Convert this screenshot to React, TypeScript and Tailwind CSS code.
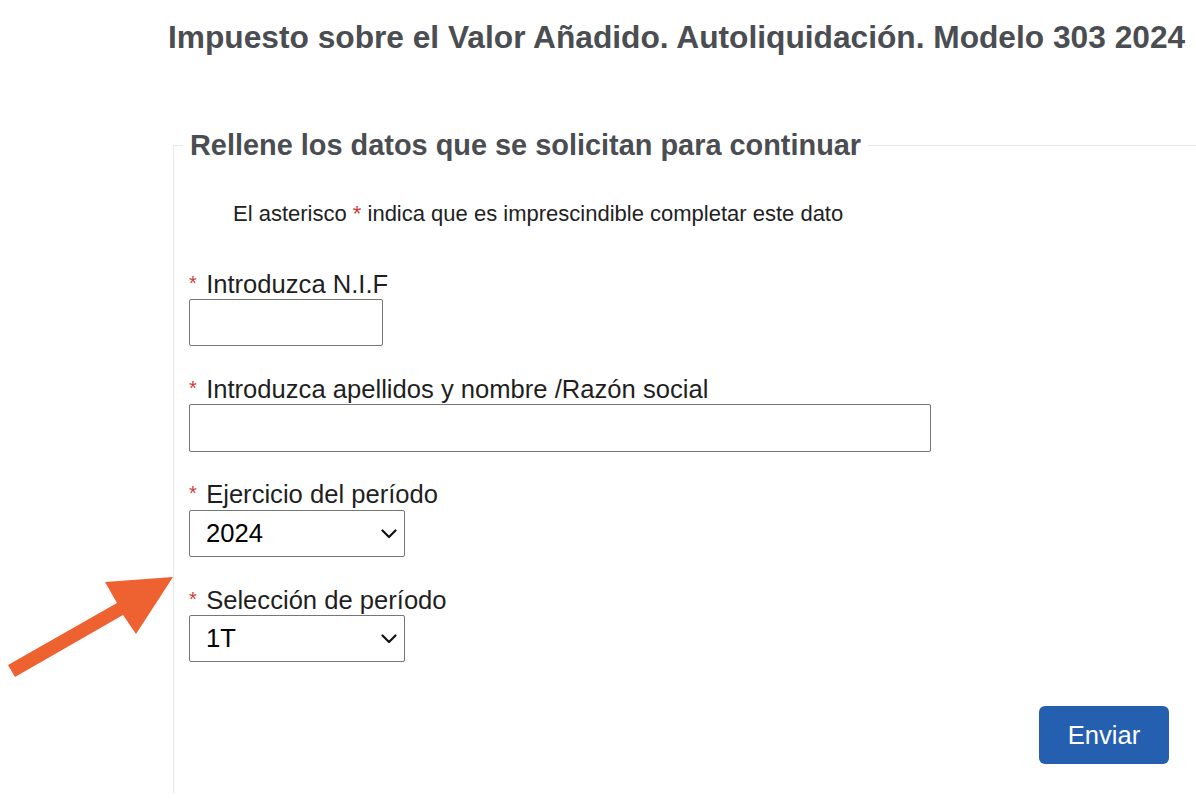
const font = { fontFamily: '"Liberation Sans", Arial, sans-serif' };

function Req({ children }: { children: React.ReactNode }) {
  return (
    <label className="block h-[26px] text-[25.6px] leading-[26px] text-[#1f1f1f] whitespace-nowrap">
      <span className="relative top-[-3px] inline-block w-[10px] text-[#cf3b36] text-[20px] leading-none">*</span>{' '}
      {children}
    </label>
  );
}

function Chevron() {
  return (
    <svg
      className="absolute left-[192px] top-[19px] pointer-events-none"
      width="16"
      height="10"
      viewBox="0 0 16 10"
    >
      <polyline points="1.5,1.5 8,8 14.5,1.5" fill="none" stroke="#111" strokeWidth="2.2" strokeLinecap="round" strokeLinejoin="round" />
    </svg>
  );
}

function Select({ value, options }: { value: string; options: string[] }) {
  return (
    <div className="relative w-[216px] h-[47px]">
      <select
        defaultValue={value}
        className="appearance-none block w-full h-full border border-[#767676] rounded-[2px] bg-white pl-[16px] text-[25.6px] text-black outline-none"
      >
        {options.map((o) => (
          <option key={o}>{o}</option>
        ))}
      </select>
      <Chevron />
    </div>
  );
}

export default function App() {
  return (
    <div className="relative w-[1196px] h-[804px] overflow-hidden bg-white" style={font}>
      <h1 className="pl-[168px] pt-[19px] text-[31.7px] leading-[36px] font-bold text-[#4a4d51] whitespace-nowrap">
        Impuesto sobre el Valor Añadido. Autoliquidación. Modelo 303 2024
      </h1>

      <fieldset className="ml-[173px] mt-[75px] w-[1023px] h-[663px] border border-r-0 border-b-0 border-[#e6e9ec]">
        <legend className="ml-[9px] px-[7px] text-[28.9px] leading-[30px] font-bold text-[#4a4d51] whitespace-nowrap">
          Rellene los datos que se solicitan para continuar
        </legend>

        <div className="pl-[15px] pr-[27px]">
          <p className="mt-[43px] pl-[44px] text-[22px] leading-[22px] text-[#222] whitespace-nowrap">
            El asterisco <span className="text-[#cf3b36]">*</span> indica que es imprescindible completar este dato
          </p>

          <div className="mt-[46px]">
            <Req>Introduzca N.I.F</Req>
            <input className="mt-[2px] block w-[194px] h-[47px] border border-[#767676] rounded-[2px] outline-none" />
          </div>

          <div className="mt-[30px]">
            <Req>Introduzca apellidos y nombre /Razón social</Req>
            <input className="mt-[2px] block w-[742px] h-[48px] border border-[#767676] rounded-[2px] outline-none" />
          </div>

          <div className="mt-[29px]">
            <Req>Ejercicio del período</Req>
            <div className="mt-[3px]">
              <Select value="2024" options={['2024', '2023', '2022']} />
            </div>
          </div>

          <div className="mt-[30px]">
            <Req>Selección de período</Req>
            <div className="mt-[2px]">
              <Select value="1T" options={['1T', '2T', '3T', '4T']} />
            </div>
          </div>

          <div className="mt-[44px] flex justify-end">
            <button className="w-[130px] h-[58px] rounded-[6px] bg-[#255fb0] text-white text-[25.6px]">
              Enviar
            </button>
          </div>
        </div>
      </fieldset>

      <svg className="absolute left-0 top-[570px] pointer-events-none" width="180" height="115" viewBox="0 570 180 115">
        <polygon
          fill="#ee6130"
          points="8,665 15,677 123,615 136,634 173,577 105,582 117,603"
        />
      </svg>
    </div>
  );
}
